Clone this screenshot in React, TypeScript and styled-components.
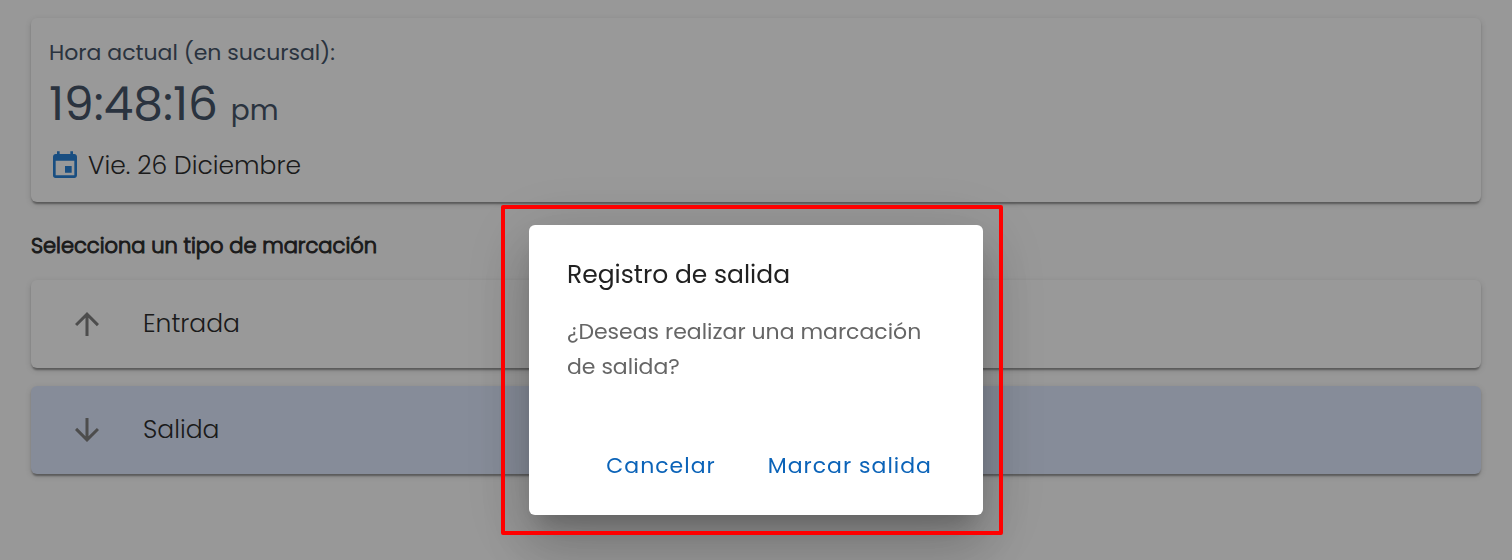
import React from "react";
import styled, { createGlobalStyle } from "styled-components";
import { MdEvent, MdArrowUpward, MdArrowDownward } from "react-icons/md";

const GlobalStyle = createGlobalStyle`
  *, *::before, *::after { box-sizing: border-box; }
  body {
    margin: 0;
    background: #fdfdfd;
    color: #2e2e2e;
    font-family: Poppins, Inter, "Open Sans", sans-serif;
    font-size: 22px;
    line-height: 34px;
  }
  button { font: inherit; color: inherit; }
  h1, h2, p { margin: 0; font-weight: 400; }
`;

const Page = styled.main`
  display: flex;
  flex-direction: column;
  padding: 18px 31px 48px;
`;

const Card = styled.section`
  border-radius: 6px;
  background: #ffffff;
  box-shadow: 0 4px 2px -2px rgba(0, 0, 0, 0.22), 0 2px 2px rgba(0, 0, 0, 0.16),
    0 2px 6px rgba(0, 0, 0, 0.14);
`;

const ClockCard = styled(Card)`
  display: flex;
  flex-direction: column;
  padding: 18px 18px 20px;
`;

const ClockLabel = styled.p`
  color: #475569;
`;

const Time = styled.time`
  display: flex;
  align-items: baseline;
  gap: 13px;
  margin-bottom: 12px;
  font-size: 47px;
  line-height: 68px;
  color: #475569;
`;

const Meridiem = styled.span`
  font-size: 28px;
  line-height: 40px;
`;

const DateRow = styled.div`
  display: flex;
  align-items: center;
  gap: 7px;
  font-size: 25px;
  line-height: 32px;
  font-weight: 300;

  svg { color: #2a83d8; }
`;

const SectionTitle = styled.h1`
  margin: 27px 0 17px;
  font-size: 21px;
  line-height: 34px;
  font-weight: 300;
  -webkit-text-stroke: 1px currentColor;
`;

const OptionList = styled.div`
  display: flex;
  flex-direction: column;
  gap: 18px;
`;

const Option = styled(Card).attrs({ as: "button" })<{ $selected?: boolean }>`
  display: flex;
  align-items: center;
  gap: 38px;
  width: 100%;
  padding: 26px 38px;
  border: 0;
  background: ${(p) => (p.$selected ? "#e0eaff" : "#ffffff")};
  font-size: 25px;
  line-height: 36px;
  font-weight: 300;
  text-align: left;
  cursor: pointer;

  svg { color: #808080; }
`;

const Backdrop = styled.div`
  position: fixed;
  inset: 0;
  display: flex;
  justify-content: center;
  align-items: flex-start;
  padding-top: 225px;
  background: rgba(0, 0, 0, 0.4);
`;

const Dialog = styled.div`
  position: relative;
  display: flex;
  flex-direction: column;
  width: 454px;
  max-width: 90%;
  padding: 32px 39px 25px 38px;
  border-radius: 6px;
  background: #ffffff;
  box-shadow: 0 16px 22px -10px rgba(0, 0, 0, 0.2), 0 34px 54px 4px rgba(0, 0, 0, 0.14),
    0 13px 66px 12px rgba(0, 0, 0, 0.12);
`;

const Highlight = styled.div`
  position: absolute;
  inset: -20px -20px -20px -28px;
  border: 4px solid #ff0000;
  border-radius: 2px;
  pointer-events: none;
`;

const DialogTitle = styled.h2`
  margin-bottom: 21px;
  font-size: 25px;
  line-height: 36px;
  color: #212121;
`;

const DialogText = styled.p`
  margin-bottom: 58px;
  line-height: 35px;
  color: #666666;
`;

const Actions = styled.div`
  display: flex;
  justify-content: flex-end;
  gap: 28px;
`;

const ActionButton = styled.button`
  padding: 6px 12px;
  border: 0;
  border-radius: 6px;
  background: transparent;
  line-height: 36px;
  letter-spacing: 1px;
  white-space: nowrap;
  color: #0b63b8;
  cursor: pointer;
`;

export default function App() {
  return (
    <>
      <GlobalStyle />
      <Page>
        <ClockCard>
          <ClockLabel>Hora actual (en sucursal):</ClockLabel>
          <Time>
            19:48:16 <Meridiem>pm</Meridiem>
          </Time>
          <DateRow>
            <MdEvent size={32} aria-hidden />
            Vie. 26 Diciembre
          </DateRow>
        </ClockCard>
        <SectionTitle>Selecciona un tipo de marcación</SectionTitle>
        <OptionList>
          <Option>
            <MdArrowUpward size={36} aria-hidden />
            Entrada
          </Option>
          <Option $selected>
            <MdArrowDownward size={36} aria-hidden />
            Salida
          </Option>
        </OptionList>
      </Page>
      <Backdrop>
        <Dialog role="dialog" aria-modal="true" aria-labelledby="dialog-title">
          <DialogTitle id="dialog-title">Registro de salida</DialogTitle>
          <DialogText>¿Deseas realizar una marcación de salida?</DialogText>
          <Actions>
            <ActionButton type="button">Cancelar</ActionButton>
            <ActionButton type="button">Marcar salida</ActionButton>
          </Actions>
          <Highlight />
        </Dialog>
      </Backdrop>
    </>
  );
}
